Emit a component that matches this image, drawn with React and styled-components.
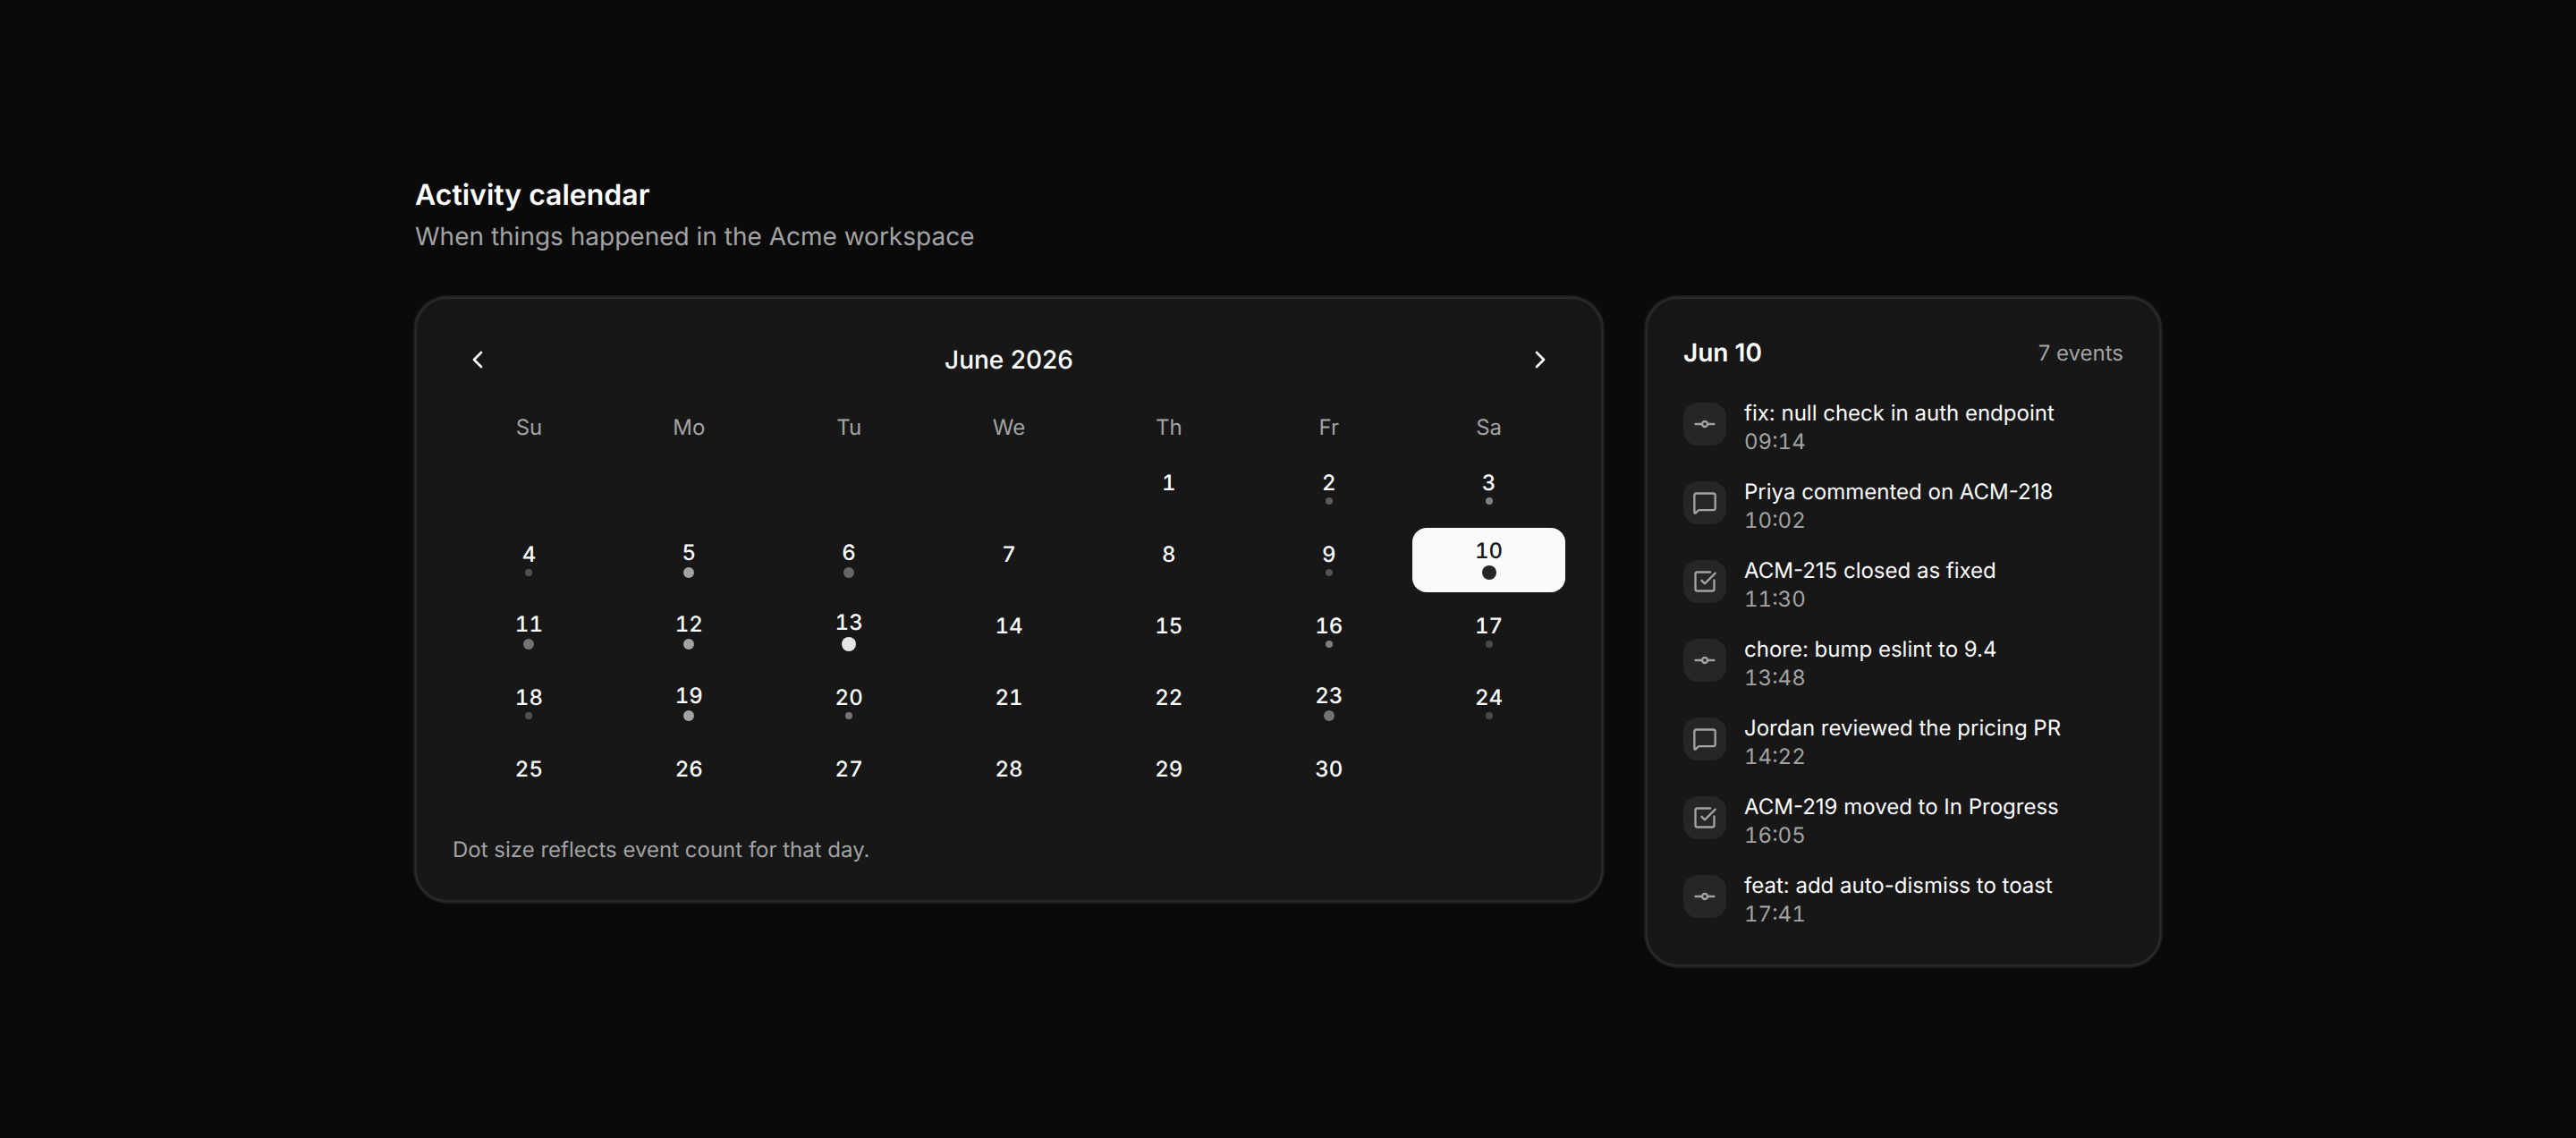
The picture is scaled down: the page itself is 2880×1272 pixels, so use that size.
import React from "react";
import styled, { createGlobalStyle } from "styled-components";
import { ChevronLeft, ChevronRight, MessageSquare, SquareCheckBig } from "lucide-react";

const GlobalStyle = createGlobalStyle`
  html, body { margin: 0; padding: 0; background: #0a0a0a; }
  body {
    font-family: Inter, "Noto Sans", sans-serif;
    color: #fff;
    text-rendering: geometricPrecision;
  }
`;

const Page = styled.div`
  min-height: 1272px;
  padding-top: 194px;
  box-sizing: border-box;
  display: flex;
  justify-content: center;
`;
const Wrap = styled.div`
  width: 1952px;
`;
const Title = styled.h1`
  margin: 0;
  font-size: 32px;
  line-height: 48px;
  font-weight: 600;
  color: #fff;
`;
const Subtitle = styled.p`
  margin: 0;
  font-size: 28px;
  line-height: 44px;
  color: #a3a3a3;
`;
const Panels = styled.div`
  display: flex;
  align-items: flex-start;
  gap: 48px;
  margin-top: 46px;
`;
const Card = styled.section`
  box-sizing: border-box;
  width: ${(p) => p.$width}px;
  padding: 40px;
  background: #171717;
  border: 2px solid #2a2a2a;
  border-radius: 36px;
  box-shadow: 0 0 0 2px #1e1e1e;
`;
const MonthBar = styled.div`
  display: flex;
  align-items: center;
  justify-content: space-between;
  margin-bottom: 28px;
`;
const NavButton = styled.button`
  width: 56px;
  height: 56px;
  display: flex;
  align-items: center;
  justify-content: center;
  padding: 0;
  background: transparent;
  border: 0;
  color: #fff;
`;
const Month = styled.div`
  font-size: 28px;
  font-weight: 500;
  color: #fff;
`;
const Grid = styled.div`
  display: grid;
  grid-template-columns: repeat(7, 1fr);
  column-gap: 8px;
  row-gap: 8px;
`;
const Weekdays = styled(Grid)`
  margin-bottom: 12px;
`;
const Weekday = styled.div`
  height: 40px;
  line-height: 40px;
  text-align: center;
  font-size: 24px;
  color: #a3a3a3;
`;
const Day = styled.div`
  height: 72px;
  border-radius: 16px;
  display: flex;
  flex-direction: column;
  align-items: center;
  justify-content: center;
  gap: 4px;
  background: ${(p) => (p.$selected ? "#fafafa" : "transparent")};
  color: ${(p) => (p.$selected ? "#171717" : "#fff")};
`;
const DayNumber = styled.span`
  font-size: 24px;
  line-height: 24px;
  font-weight: 500;
  font-variant-numeric: tabular-nums;
`;
const DotSlot = styled.span`
  min-height: 8px;
  display: flex;
  align-items: center;
`;
const Dot = styled.span`
  display: block;
  width: ${(p) => p.$size}px;
  height: ${(p) => p.$size}px;
  border-radius: 50%;
  background: ${(p) => p.$color};
`;
const Footnote = styled.p`
  margin: 32px 0 0;
  font-size: 24px;
  line-height: 32px;
  color: #a3a3a3;
`;
const PanelHead = styled.div`
  display: flex;
  align-items: center;
  justify-content: space-between;
  height: 40px;
  margin-bottom: 32px;
`;
const PanelDate = styled.div`
  font-size: 28px;
  font-weight: 600;
  color: #fff;
`;
const PanelCount = styled.div`
  font-size: 24px;
  color: #a3a3a3;
`;
const EventList = styled.div`
  display: flex;
  flex-direction: column;
  gap: 24px;
`;
const EventRow = styled.div`
  display: flex;
  align-items: flex-start;
  gap: 20px;
`;
const EventIcon = styled.div`
  width: 48px;
  height: 48px;
  margin-top: 4px;
  flex: none;
  display: flex;
  align-items: center;
  justify-content: center;
  border-radius: 16px;
  background: #262626;
  color: #a3a3a3;
`;
const EventBody = styled.div`
  display: flex;
  flex-direction: column;
`;
const EventTitle = styled.div`
  font-size: 24px;
  line-height: 32px;
  color: #fff;
`;
const EventTime = styled.div`
  font-size: 24px;
  line-height: 32px;
  font-variant-numeric: tabular-nums;
  color: #a3a3a3;
`;

const CommitIcon = () => (
  <svg width="28" height="28" viewBox="0 0 28 28" fill="none" stroke="currentColor" strokeWidth="2.33" strokeLinecap="round">
    <circle cx="14" cy="14" r="3" />
    <path d="M3.5 14H11M17 14h7.5" />
  </svg>
);

const DAYS = ["Su", "Mo", "Tu", "We", "Th", "Fr", "Sa"];

// size and colour of the dot per day of the month
const dots = {
  2: [8, "#5a5a5a"], 3: [8, "#808080"],
  4: [8, "#525252"], 5: [12, "#a3a3a3"], 6: [12, "#666666"], 9: [8, "#525252"], 10: [16, "#262626"],
  11: [12, "#737373"], 12: [12, "#a3a3a3"], 13: [16, "#e5e5e5"], 16: [8, "#808080"], 17: [8, "#4a4a4a"],
  18: [8, "#525252"], 19: [12, "#a3a3a3"], 20: [8, "#737373"], 23: [12, "#737373"], 24: [8, "#4a4a4a"],
};

const EVENTS = [
  { kind: "commit", title: "fix: null check in auth endpoint", time: "09:14" },
  { kind: "comment", title: "Priya commented on ACM-218", time: "10:02" },
  { kind: "issue", title: "ACM-215 closed as fixed", time: "11:30" },
  { kind: "commit", title: "chore: bump eslint to 9.4", time: "13:48" },
  { kind: "comment", title: "Jordan reviewed the pricing PR", time: "14:22" },
  { kind: "issue", title: "ACM-219 moved to In Progress", time: "16:05" },
  { kind: "commit", title: "feat: add auto-dismiss to toast", time: "17:41" },
];

const ICONS = {
  commit: <CommitIcon />,
  comment: <MessageSquare size={28} strokeWidth={2} />,
  issue: <SquareCheckBig size={28} strokeWidth={2} />,
};

export default function App() {
  const cells = [];
  for (let i = 0; i < 4; i++) cells.push(<div key={"blank" + i} />);
  for (let d = 1; d <= 30; d++) {
    const dot = dots[d];
    cells.push(
      <Day key={d} $selected={d === 10}>
        <DayNumber>{d}</DayNumber>
        <DotSlot>{dot && <Dot $size={dot[0]} $color={dot[1]} />}</DotSlot>
      </Day>
    );
  }

  return (
    <Page>
      <GlobalStyle />
      <Wrap>
        <Title>Activity calendar</Title>
        <Subtitle>When things happened in the Acme workspace</Subtitle>
        <Panels>
          <Card $width={1328}>
            <MonthBar>
              <NavButton aria-label="Previous month"><ChevronLeft size={32} strokeWidth={2} /></NavButton>
              <Month>June 2026</Month>
              <NavButton aria-label="Next month"><ChevronRight size={32} strokeWidth={2} /></NavButton>
            </MonthBar>
            <Weekdays>
              {DAYS.map((d) => <Weekday key={d}>{d}</Weekday>)}
            </Weekdays>
            <Grid>{cells}</Grid>
            <Footnote>Dot size reflects event count for that day.</Footnote>
          </Card>
          <Card $width={576}>
            <PanelHead>
              <PanelDate>Jun 10</PanelDate>
              <PanelCount>7 events</PanelCount>
            </PanelHead>
            <EventList>
              {EVENTS.map((e) => (
                <EventRow key={e.time}>
                  <EventIcon>{ICONS[e.kind]}</EventIcon>
                  <EventBody>
                    <EventTitle>{e.title}</EventTitle>
                    <EventTime>{e.time}</EventTime>
                  </EventBody>
                </EventRow>
              ))}
            </EventList>
          </Card>
        </Panels>
      </Wrap>
    </Page>
  );
}
